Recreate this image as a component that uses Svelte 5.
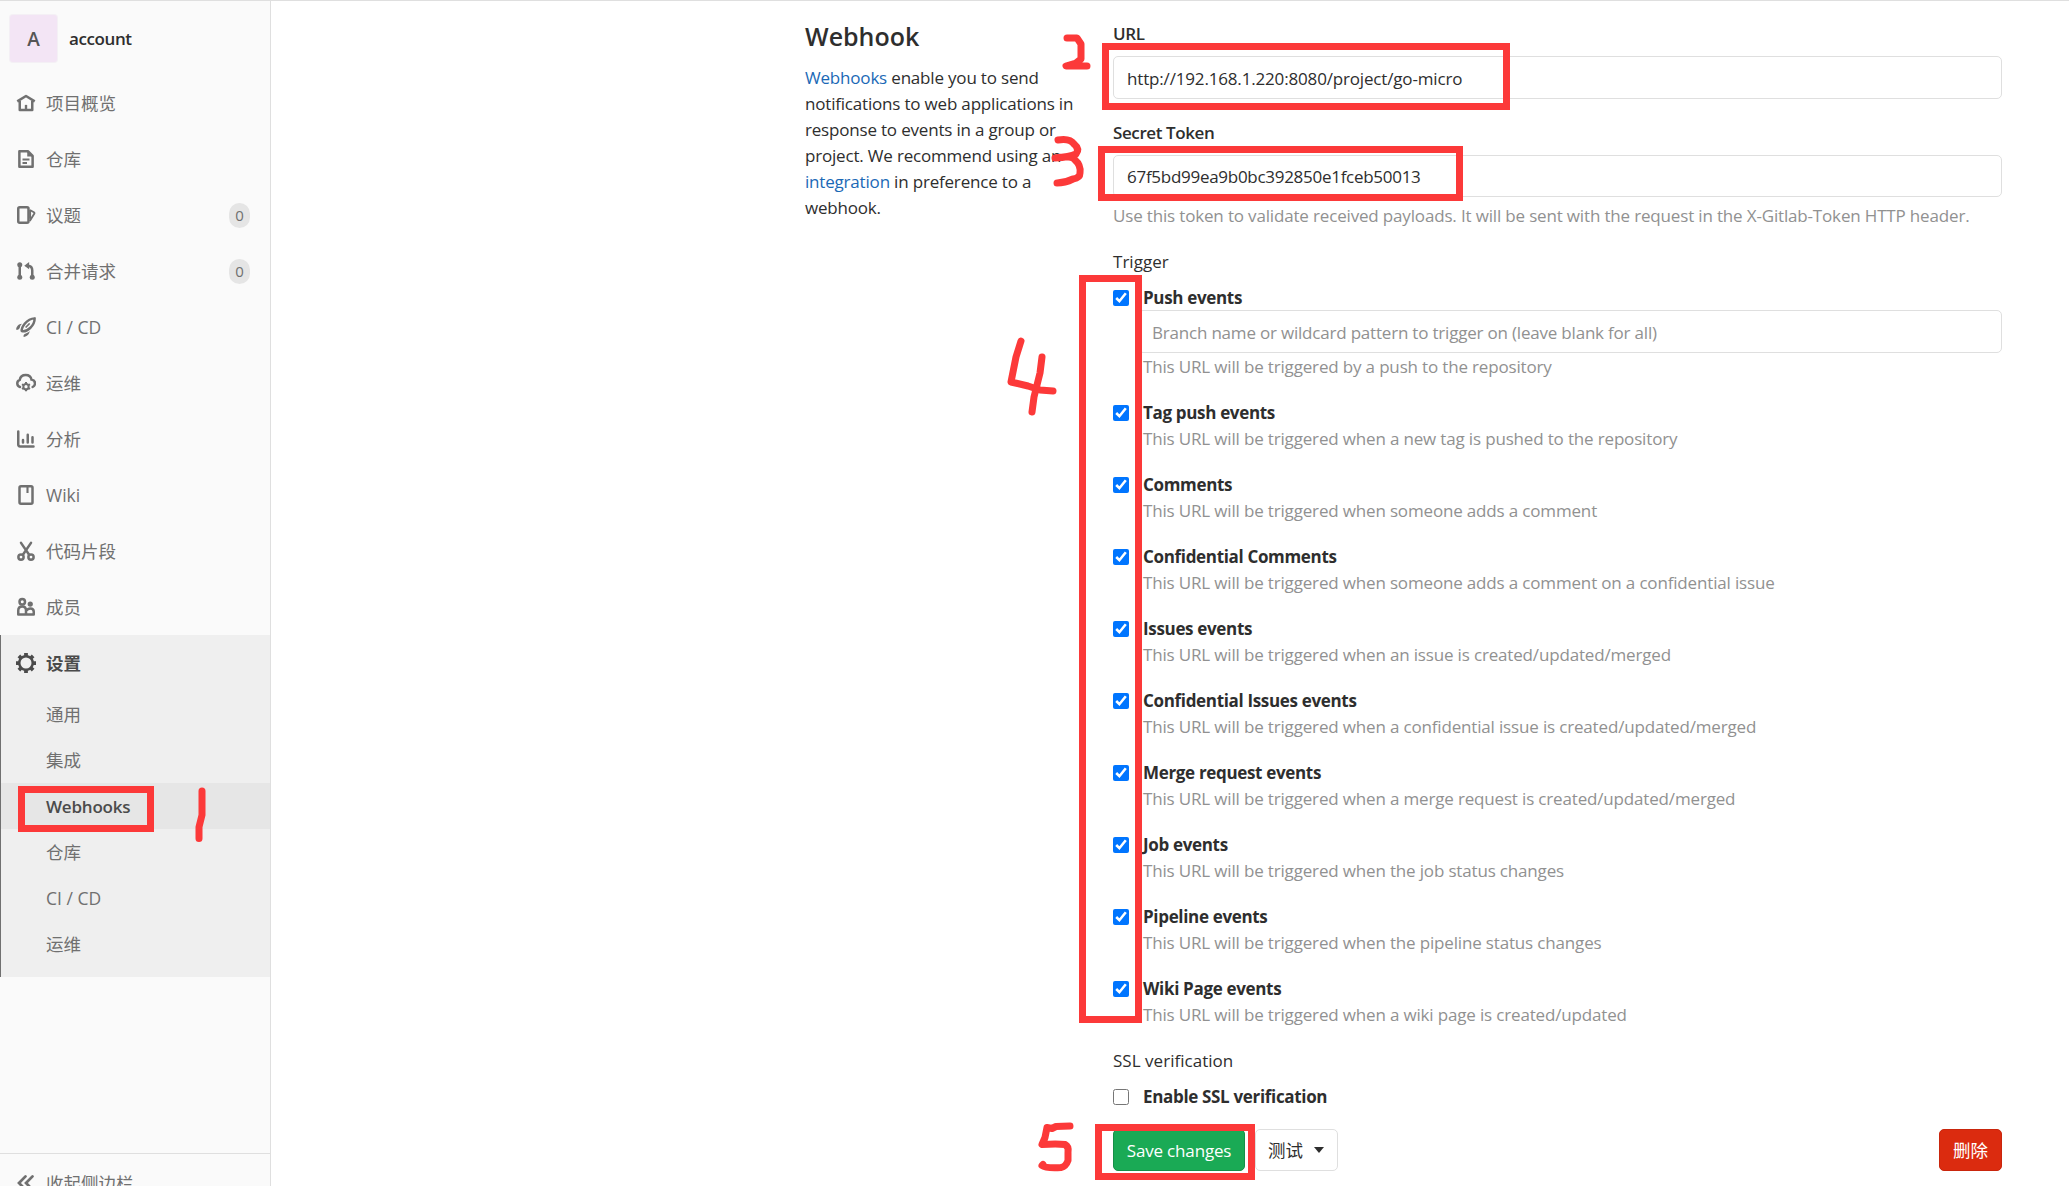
<script>
  const nav = [
    { icon: 'home', label: '项目概览' },
    { icon: 'doc', label: '仓库' },
    { icon: 'issues', label: '议题', count: 0 },
    { icon: 'merge', label: '合并请求', count: 0 },
    { icon: 'rocket', label: 'CI / CD' },
    { icon: 'cloud', label: '运维' },
    { icon: 'chart', label: '分析' },
    { icon: 'book', label: 'Wiki' },
    { icon: 'scissors', label: '代码片段' },
    { icon: 'users', label: '成员' }
  ];
  const settings = ['通用', '集成', 'Webhooks', '仓库', 'CI / CD', '运维'];
  const events = [
    ['Tag push events', 'This URL will be triggered when a new tag is pushed to the repository'],
    ['Comments', 'This URL will be triggered when someone adds a comment'],
    ['Confidential Comments', 'This URL will be triggered when someone adds a comment on a confidential issue'],
    ['Issues events', 'This URL will be triggered when an issue is created/updated/merged'],
    ['Confidential Issues events', 'This URL will be triggered when a confidential issue is created/updated/merged'],
    ['Merge request events', 'This URL will be triggered when a merge request is created/updated/merged'],
    ['Job events', 'This URL will be triggered when the job status changes'],
    ['Pipeline events', 'This URL will be triggered when the pipeline status changes'],
    ['Wiki Page events', 'This URL will be triggered when a wiki page is created/updated']
  ];
</script>

{#snippet glyph(name)}
  <svg class="icon" viewBox="0 0 16 16" aria-hidden="true">
    {#if name === 'home'}
      <path d="M1 6.7 8 2.4l7 4.3M3 6.3v7.2h10V6.3" stroke-linejoin="round" />
      <path d="M8 13V9.5" stroke-width="1.9" />
    {:else if name === 'doc'}
      <path d="M2.7 1.8h6.8l3.8 3.8v8.6H2.7z" stroke-linejoin="round" />
      <path d="M9 2v4h4z" class="fill" />
      <path d="M5.2 8.3h5.6M5.2 11.2h3.600" stroke-width="1.6" />
    {:else if name === 'issues'}
      <rect x="1.8" y="1.8" width="8.2" height="12.4" rx="1.2" />
      <path d="m11.1 4 3.2 1.8c.5.3.6.7.3 1.2L11 12.8M11.3 4v7" stroke-width="1.5" />
    {:else if name === 'merge'}
      <path d="M3 3v10M13 13V7.5C13 5 11.5 3.9 9.4 3.8" stroke-width="2" />
      <path d="M10.5.8v5.7L6.6 3.700z" class="fill" />
      <circle cx="3" cy="3" r="2" class="fill" />
      <circle cx="3" cy="13" r="2" class="fill" />
      <circle cx="13" cy="13" r="2" class="fill" />
    {:else if name === 'rocket'}
      <path d="M4.7 11.3C4 8.5 8.500 1.3 14.9 1.1 15 7 8.7 12.3 4.7 11.3z" stroke-linejoin="round" />
      <path d="m7.7 8.4 3.2-3.3" stroke-width="1.2" />
      <path d="M4.8 5.3C2.1 5.5.3 7.3.1 10.1c1.5.4 2.8-.6 3.1-2.2.2-1 .8-1.8 1.6-2.6zM10.9 11.2c-.2 2.5-2 4.5-4.8 4.7-.4-1.3.4-2.4 1.8-2.8 1.1-.3 2.1-.8 3-1.9z" class="fill" />
    {:else if name === 'cloud'}
      <path d="M3.2 11.2A3 3 0 0 1 3 5.5C3.400 3 5.4 1.6 7.8 1.6c2.5 0 4.2 1.5 4.600 3.7 1.7.3 2.8 1.4 2.8 3 0 1.3-.7 2.3-1.9 2.9" stroke-linecap="round" />
      <circle cx="8" cy="10.9" r="2.1" stroke-width="1.6" />
      <path d="M8 7.2v1.4M8 13.2v1.4M4.8 9l1.2.7M10 12.1l1.2.7M4.8 12.8l1.2-.7M10 9.7l1.2-.7" stroke-width="1.6" />
    {:else if name === 'chart'}
      <path d="M1.8 2v10.4c0 1.1.4 1.5 1.5 1.5H14M5.6 8.7v2M9.4 4.5v6.2M13.2 6.5v4.2" stroke-linecap="round" stroke-width="2" />
    {:else if name === 'book'}
      <rect x="2.8" y="1" width="10.4" height="14" rx="1.2" />
      <path d="M9.2 1v5.4" stroke-width="1.7" />
    {:else if name === 'scissors'}
      <path d="M4 1.5 10.5 11M12 1.5 5.5 11" stroke-linecap="round" />
      <circle cx="4" cy="12.8" r="2.1" />
      <circle cx="12" cy="12.8" r="2.1" />
    {:else if name === 'users'}
      <circle cx="5" cy="3.8" r="2.2" />
      <circle cx="11.4" cy="5.6" r="2.1" class="fill" />
      <path d="M1.8 14v-3.2C1.8 8.8 3 7.5 5 7.5s3 1.3 3 3.3V14zM8 14h6.2v-2.2c0-1.6-1-2.7-2.7-2.7-1.5 0-2.6.8-3.2 1.9" stroke-linejoin="round" />
    {:else if name === 'gear'}
      <circle cx="8" cy="8" r="5.400" stroke-width="2" />
      <path d="M8 0v2.5M8 13.5V16M0 8h2.5M13.5 8H16M2.300 2.300l1.700 1.700M12 12l1.700 1.700M2.300 13.700l1.700-1.700M12 4l1.700-1.700" stroke-width="3" />
    {:else}
      <path d="M7.600 2.7 2.4 8l5.2 5.3M13.2 2.7 8 8l5.2 5.3" stroke-linecap="round" stroke-width="2.2" />
    {/if}
  </svg>
{/snippet}

<div class="page">
  <aside>
    <header><span class="avatar">A</span><strong>account</strong></header>
    <nav>
      {#each nav as item}
        <a class="item" href="#top">
          {@render glyph(item.icon)}<span>{item.label}</span>
          {#if item.count !== undefined}<em>{item.count}</em>{/if}
        </a>
      {/each}
      <section class="open">
        <a class="item current" href="#top">{@render glyph('gear')}<span>设置</span></a>
        {#each settings as s}
          <a class="sub" class:active={s === 'Webhooks'} href="#top">{s}</a>
        {/each}
      </section>
    </nav>
    <footer>{@render glyph('collapse')}<span>收起侧边栏</span></footer>
  </aside>

  <main>
    <div class="intro">
      <h1>Webhook</h1>
      <p>
        <a href="#top">Webhooks</a> enable you to send<br />notifications to web applications in<br />response
        to events in a group or<br />project. We recommend using an<br /><a href="#top">integration</a> in preference
        to a<br />webhook.
      </p>
    </div>
    <form>
      <label class="name" for="url">URL</label>
      <input id="url" class="field url" type="text" value="http://192.168.1.220:8080/project/go-micro" />
      <label class="name second" for="token">Secret Token</label>
      <input id="token" class="field token" type="text" value="67f5bd99ea9b0bc392850e1fceb50013" />
      <p class="help token-help">Use this token to validate received payloads. It will be sent with the request in the X-Gitlab-Token HTTP header.</p>
      <div class="title trigger">Trigger</div>
      <div class="event push">
        <input type="checkbox" checked />
        <div class="body">
          <b>Push events</b>
          <input class="field branch" type="text" placeholder="Branch name or wildcard pattern to trigger on (leave blank for all)" />
          <p class="help">This URL will be triggered by a push to the repository</p>
        </div>
      </div>
      {#each events as [name, text]}
        <div class="event">
          <input type="checkbox" checked />
          <div class="body"><b>{name}</b><p class="help">{text}</p></div>
        </div>
      {/each}
      <div class="title ssl">SSL verification</div>
      <div class="event enable"><input type="checkbox" /><div class="body"><b>Enable SSL verification</b></div></div>
      <div class="actions">
        <button class="save" type="button">Save changes</button>
        <button class="test" type="button">测试<i></i></button>
        <button class="delete" type="button">删除</button>
      </div>
    </form>
  </main>

  <!-- Hand-drawn step markers laid over the page -->
  <svg class="marks" viewBox="0 0 2069 1186" aria-hidden="true">
    <g class="boxes">
      <rect x="21.5" y="789.5" width="129" height="39" />
      <rect x="1105.5" y="46.5" width="401" height="60" />
      <rect x="1101.5" y="149.5" width="358" height="48" />
      <rect x="1082.5" y="278.5" width="56" height="741" />
      <rect x="1098.5" y="1127.5" width="153" height="49" />
    </g>
    <g class="strokes">
      <path d="M202 791v24l-3 12v11.500" />
      <path d="M1067 38h10l4 6v15l-5 4-10 3h21" />
      <path d="M1058 140q12-2 16 4 6 5 2 10-6 3-21 4 17-3 20 2 6 5 5 13 0 5-7 6-8 4-16 4" />
      <path d="M1021 341l-5 16-5 25 17 4 12 4 13 1M1042 357l-2 16-6 24-2 15" />
      <path d="M1070 1126l-14 .5-4 2-5-1-2 10-3 7q15-1 23 0 4 2 3 8v8q-2 6-7 7-15 1-19-2l1-1" />
    </g>
  </svg>
</div>

<style>
  :global(body) { margin: 0; overflow: hidden; }
  .page {
    position: relative; display: flex; width: 2069px; height: 1186px; box-sizing: border-box; overflow: hidden;
    border-top: 1px solid #dfdfdf; background: #fff; color: #2e2e2e;
    font: 17px/26px "Open Sans", "Noto Sans CJK SC", sans-serif; letter-spacing: -0.165px;
  }
  a { color: #1b69b6; text-decoration: none; }
  p, h1 { margin: 0; }

  aside { display: flex; flex-direction: column; width: 270px; border-right: 1px solid #dfdfdf; background: #fafafa; color: #707070; flex: none; }
  header { display: flex; align-items: center; gap: 12px; padding: 13px 0 0 10px; height: 48px; color: #2e2e2e; }
  header strong { font-weight: 600; padding-top: 1px; letter-spacing: -0.4px; }
  .avatar { width: 47px; height: 47px; border-radius: 3px; background: #f3e5f5; color: #555; font-size: 19px; line-height: 48px; font-weight: 600; text-align: center; box-shadow: 0 0 0 1px #f4f0f5; }
  nav { padding-top: 13px; }
  .item { display: flex; align-items: center; height: 56px; padding-left: 16px; color: #707070; }
  .item span, footer span { margin-left: 10px; font-size: 17.5px; letter-spacing: 0; }
  .item em { margin: 0 20px 0 auto; width: 21px; height: 25px; border-radius: 11px; background: #e5e5e5; font: 15px/25px "Open Sans", sans-serif; text-align: center; }
  .icon { width: 20px; height: 20px; flex: none; fill: none; stroke: currentColor; stroke-width: 2; }
  .icon .fill { fill: currentColor; stroke: none; }
  .open { background: #efefef; height: 342px; box-shadow: inset 1px 0 #707070; }
  .current { color: #4b4b4b; font-weight: 700; }
  .sub { display: block; height: 46px; margin-left: 1px; box-sizing: border-box; padding-left: 45px; line-height: 46px; color: #707070; font-size: 17.5px; letter-spacing: 0; }
  .active { background: #e6e6e6; color: #4b4b4b; font-weight: 600; font-size: 17px; line-height: 48px; letter-spacing: -0.2px; }
  footer { display: flex; align-items: center; height: 58px; margin-top: auto; margin-bottom: -26px; padding-left: 16px; border-top: 1px solid #dfdfdf; flex: none; }

  main { display: flex; flex: 1; padding-left: 534px; }
  .intro { width: 308px; flex: none; padding-top: 18px; white-space: nowrap; }
  h1 { font-size: 25px; line-height: 34px; font-weight: 600; letter-spacing: 0; }
  .intro p { margin-top: 12px; line-height: 26.1px; letter-spacing: -0.19px; }
  form { display: flex; flex-direction: column; width: 889px; padding-top: 19px; flex: none; }
  .name, .title, .help, .body b { height: 26px; line-height: 28px; }
  .name { font-weight: 600; letter-spacing: -0.4px; }
  .title { letter-spacing: 0.03px; }
  .second { margin-top: 20px; }
  .field { box-sizing: border-box; width: 100%; height: 43px; padding: 2px 13px 0; border: 1px solid #dfdfdf; border-radius: 5px; background: #fff; color: #2e2e2e; font: inherit; letter-spacing: inherit; outline: 0; }
  .field::placeholder { color: #919191; opacity: 1; }
  .url, .token { margin-top: 10px; }
  .token { height: 42px; padding-top: 0; letter-spacing: -0.28px; }
  .help { color: #919191; white-space: nowrap; }
  .token-help { margin-top: 5px; }
  .trigger { margin: 20px 0 10px; }
  .event { display: flex; gap: 14px; margin-bottom: 20px; }
  .event > input { width: 16px; height: 16px; margin: 6px 0 0; flex: none; }
  .body { flex: 1; }
  .body b { display: block; font-weight: 700; letter-spacing: -0.33px; }
  .body .branch { display: block; width: 864px; margin-left: -5px; letter-spacing: -0.2px; }
  .ssl { margin-bottom: 10px; }
  .actions { display: flex; height: 42px; }
  button { box-sizing: border-box; height: 42px; border: 1px solid; border-radius: 5px; padding: 0; font: inherit; letter-spacing: inherit; }
  .save { width: 132px; padding-top: 2px; background: #1aaa55; border-color: #168f48; color: #fff; }
  .test { display: flex; align-items: center; width: 83px; margin-left: 10px; padding-left: 12px; background: #fff; border-color: #dfdfdf; color: #2e2e2e; font-size: 17.5px; letter-spacing: 0; }
  .test i { margin-left: 11px; border: 5.5px solid transparent; border-top: 6px solid #2e2e2e; border-bottom: 0; }
  .delete { width: 63px; margin-left: auto; background: #db2b0f; border-color: #c9260d; color: #fff; font-size: 17.5px; letter-spacing: 0; }

  .marks { position: absolute; left: 0; top: -1px; width: 2069px; height: 1186px; pointer-events: none; fill: none; stroke: #fc3939; stroke-width: 7; }
  .strokes { stroke-linecap: round; stroke-linejoin: round; stroke-width: 7; }
</style>
